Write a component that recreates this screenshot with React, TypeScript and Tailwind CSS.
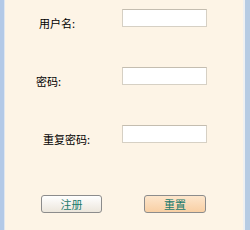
import React from "react";

const font = { fontFamily: '"Noto Sans CJK SC", "Noto Sans", sans-serif' };

function Row({ label, pl, mt }: { label: string; pl: string; mt: string }) {
  return (
    <div className={`flex items-end h-[18px] ${mt}`}>
      <div className="w-[117px] shrink-0">
        <span className={`block ${pl} text-[11px] leading-none text-[#000000] translate-y-[2px]`}>{label}</span>
      </div>
      <div className="w-[85px] h-[18px] bg-white border border-[#d6d0c4] border-t-[#c4bdb0]" />
    </div>
  );
}

export default function App() {
  return (
    <div className="flex w-[250px] h-[230px]" style={font}>
      <div className="w-[4px] bg-[#b3c9e7]" />
      <div className="w-[1px] bg-[#dfe6ef]" />
      <div className="flex-1 bg-[#fdf4e6] flex flex-col">
        <Row label="用户名:" pl="pl-[34px]" mt="mt-[9px]" />
        <Row label="密码:" pl="pl-[31px]" mt="mt-[40px]" />
        <Row label="重复密码:" pl="pl-[38px]" mt="mt-[40px]" />
        <div className="flex mt-[52px]">
          <button className="ml-[36px] w-[61px] h-[18px] rounded-[3px] border border-[#8c8c8c] bg-gradient-to-b from-[#ffffff] to-[#ece6dc] text-[11px] leading-none text-[#187a6c]">
            注册
          </button>
          <button className="ml-[42px] w-[62px] h-[18px] rounded-[3px] border border-[#8c8c8c] bg-gradient-to-b from-[#fde6cc] to-[#f8cfa4] text-[11px] leading-none text-[#187a6c]">
            重置
          </button>
        </div>
      </div>
      <div className="w-[2px] bg-[#eef0f2]" />
      <div className="w-[5px] bg-[#b6cbe3]" />
    </div>
  );
}
